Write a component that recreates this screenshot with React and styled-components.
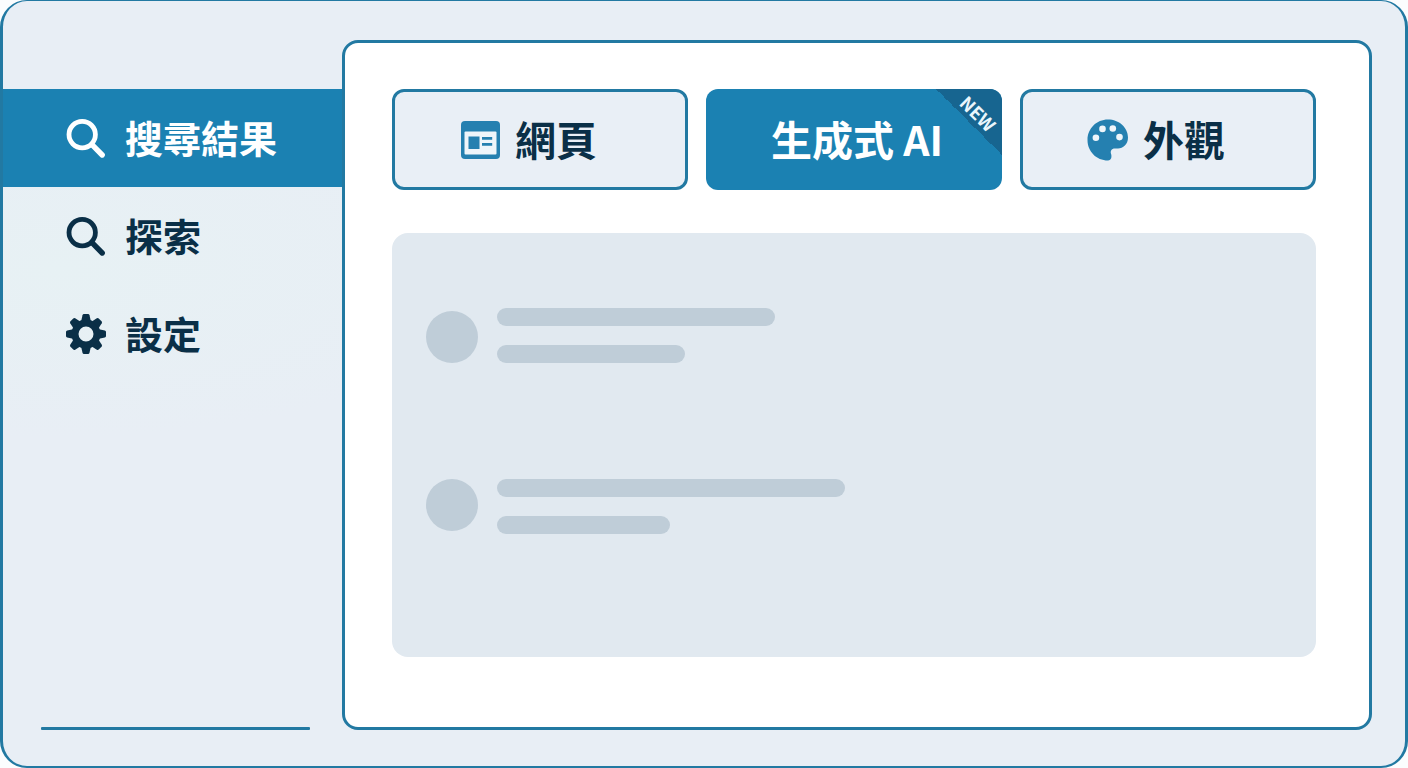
import { useState } from "react";
import styled, { createGlobalStyle } from "styled-components";

const GlobalStyle = createGlobalStyle`
    *{
        box-sizing: border-box;
    }

    body{
        margin: 0;
        background-color: #fbfdfe;
        font-family: "Noto Sans CJK TC", "Noto Sans", sans-serif;
        color: #0a2f47;
    }

    button{
        font: inherit;
        color: inherit;
        cursor: pointer;
    }
`

const Frame = styled.div`
    display: flex;
    min-height: 100vh;
    padding: 0 33px 0 0;
    background: radial-gradient(ellipse at 4% 35%, #e7f1f4 0, #e8eef5 24%);
    border: solid #2279a2;
    border-width: 1px 3px 2px 3px;
    border-radius: 27px;
`

const Sidebar = styled.aside`
    display: flex;
    flex-direction: column;
    justify-content: space-between;
    flex: 0 0 339px;
    padding: 88px 0 36px;
`

const NavList = styled.ul`
    display: flex;
    flex-direction: column;
    margin: 0;
    padding: 0;
    list-style: none;
`

const NavButton = styled.button`
    display: flex;
    align-items: center;
    gap: 19px;
    width: 100%;
    height: 98px;
    padding: 0 0 0 63px;
    border: none;
    background-color: ${({ $active }) => ($active ? "#1b81b2" : "transparent")};

    && {
        font-size: 38px;
        font-weight: 700;
        line-height: 48px;
        color: ${({ $active }) => ($active ? "white" : "#0a2f47")};
    }
`

const Label = styled.span`
    padding-bottom: 3px;
`

const Divider = styled.hr`
    width: 269px;
    height: 3px;
    margin: 0 0 0 38px;
    border: none;
    border-radius: 1px;
    background-color: #2279a2;
`

const Panel = styled.main`
    display: flex;
    flex-direction: column;
    flex: 1;
    gap: 43px;
    margin: 39px 0 36px;
    padding: 46px 53px 70px 47px;
    background-color: white;
    border: 3px solid #2279a2;
    border-radius: 16px;
`

const Tabs = styled.div`
    display: grid;
    grid-template-columns: repeat(3, 1fr);
    gap: 18px;
`

const Tab = styled.button`
    position: relative;
    display: flex;
    align-items: center;
    justify-content: center;
    gap: 15px;
    height: 101px;
    padding: ${({ $icon }) => ($icon ? "0 23px 0 0" : "0 0 0 6px")};
    overflow: hidden;
    border: ${({ $active }) => ($active ? "none" : "3px solid #2279a2")};
    border-radius: 12px;
    background-color: ${({ $active }) => ($active ? "#1b81b2" : "#e9eff6")};

    && {
        font-size: 41px;
        font-weight: 700;
        line-height: 52px;
        color: ${({ $active }) => ($active ? "white" : "#0a2f47")};
    }
`

const Ribbon = styled.span`
    position: absolute;
    top: 0;
    right: 0;
    display: grid;
    place-items: center;
    width: 66px;
    height: 66px;
    padding: 0 0 18px 20px;
    background: linear-gradient(45deg, transparent 50%, #176590 50%);
`

const RibbonText = styled.span`
    font-size: 18px;
    font-weight: 700;
    line-height: 20px;
    color: #eaf6fc;
    transform: rotate(45deg);
`

const Results = styled.section`
    display: flex;
    flex-direction: column;
    flex: 1;
    gap: 116px;
    padding: 75px 34px;
    border-radius: 16px;
    background-color: #e1e9f0;
`

const Row = styled.div`
    display: flex;
    align-items: ${({ $align }) => $align};
    gap: 19px;
`

const Avatar = styled.div`
    width: 52px;
    height: 52px;
    border-radius: 50%;
    background-color: #bfcdd8;
`

const Lines = styled.div`
    display: flex;
    flex-direction: column;
    gap: 19px;
`

const Line = styled.div`
    width: ${({ $width }) => $width}px;
    height: 18px;
    border-radius: 9px;
    background-color: #bfcdd8;
`

const Icon = styled.svg`
    flex: none;
    width: 40px;
    height: 40px;
    overflow: visible;
`

const SearchIcon = () => (
    <Icon viewBox="0 0 40 40" fill="none" stroke="currentColor" aria-hidden="true">
        <circle cx="16.2" cy="16.6" r="13.2" strokeWidth="4.8"/>
        <path d="M26 26.6 36.2 37" strokeWidth="5.4" strokeLinecap="round"/>
    </Icon>
)

const teeth = [0, 45, 90, 135, 180, 225, 270, 315]

const GearIcon = () => (
    <Icon viewBox="0 0 40 40" fill="currentColor" aria-hidden="true">
        <circle cx="20" cy="20" r="11" fill="none" stroke="currentColor" strokeWidth="7"/>
        {teeth.map(angle => (
            <path
                key={angle}
                d="M15.2 7 16.5 1.2Q16.8 0 18 0H22Q23.2 0 23.5 1.2L24.8 7Z"
                transform={`rotate(${angle} 20 20)`}
            />
        ))}
    </Icon>
)

const WebIcon = () => (
    <Icon viewBox="0 0 40 40" aria-hidden="true">
        <rect x="1" y="1" width="39" height="38" rx="4" fill="#2580b0"/>
        <rect x="4.5" y="11.5" width="32" height="23" rx="1" fill="#eef5fa"/>
        <rect x="8.5" y="16.5" width="11" height="12.5" fill="#2580b0"/>
        <path d="M22 18.3H32.2M22 24.3H32.2" stroke="#2580b0" strokeWidth="2.8"/>
    </Icon>
)

const PaletteIcon = () => (
    <Icon viewBox="0.5 0.5 40 40" aria-hidden="true">
        <path
            d="M20.5 0C31.5 0 40.5 8 40.5 18C40.5 25 35.5 28.7 30.5 29H27.5C23.8 29 22.6 31.6 23.6 34.6C24.4 37.2 24 41 20.5 41C9 41 0 32 0 20.5C0 9 9 0 20.5 0Z"
            fill="#2580b0"
        />
        <g fill="#eef5fa">
            <circle cx="8.4" cy="18.3" r="3.3"/>
            <circle cx="15" cy="9.4" r="3.3"/>
            <circle cx="25.3" cy="9" r="3.3"/>
            <circle cx="32" cy="17.6" r="3.3"/>
        </g>
    </Icon>
)

const navItems = [
    { label: "搜尋結果", icon: SearchIcon },
    { label: "探索", icon: SearchIcon },
    { label: "設定", icon: GearIcon },
]

const tabItems = [
    { label: "網頁", icon: WebIcon },
    { label: "生成式 AI", badge: "NEW" },
    { label: "外觀", icon: PaletteIcon },
]

const placeholders = [
    { align: "flex-end", widths: [278, 188] },
    { align: "flex-start", widths: [348, 173] },
]

const App = () => {
    const [page, setPage] = useState(0)
    const [tab, setTab] = useState(1)

    return(
        <>
            <GlobalStyle/>
            <Frame>
                <Sidebar>
                    <nav>
                        <NavList>
                            {navItems.map(({ label, icon: ItemIcon }, i) => (
                                <li key={label}>
                                    <NavButton $active={page === i} onClick={() => setPage(i)}>
                                        <ItemIcon/>
                                        <Label>{label}</Label>
                                    </NavButton>
                                </li>
                            ))}
                        </NavList>
                    </nav>
                    <Divider/>
                </Sidebar>
                <Panel>
                    <Tabs role="tablist">
                        {tabItems.map(({ label, icon: TabIcon, badge }, i) => (
                            <Tab
                                key={label}
                                role="tab"
                                aria-selected={tab === i}
                                $active={tab === i}
                                $icon={Boolean(TabIcon)}
                                onClick={() => setTab(i)}
                            >
                                {TabIcon && <TabIcon/>}
                                <Label>{label}</Label>
                                {badge && <Ribbon><RibbonText>{badge}</RibbonText></Ribbon>}
                            </Tab>
                        ))}
                    </Tabs>
                    <Results>
                        {placeholders.map(({ align, widths }) => (
                            <Row key={align} $align={align}>
                                <Avatar/>
                                <Lines>
                                    {widths.map(width => <Line key={width} $width={width}/>)}
                                </Lines>
                            </Row>
                        ))}
                    </Results>
                </Panel>
            </Frame>
        </>
    )
}

export default App
